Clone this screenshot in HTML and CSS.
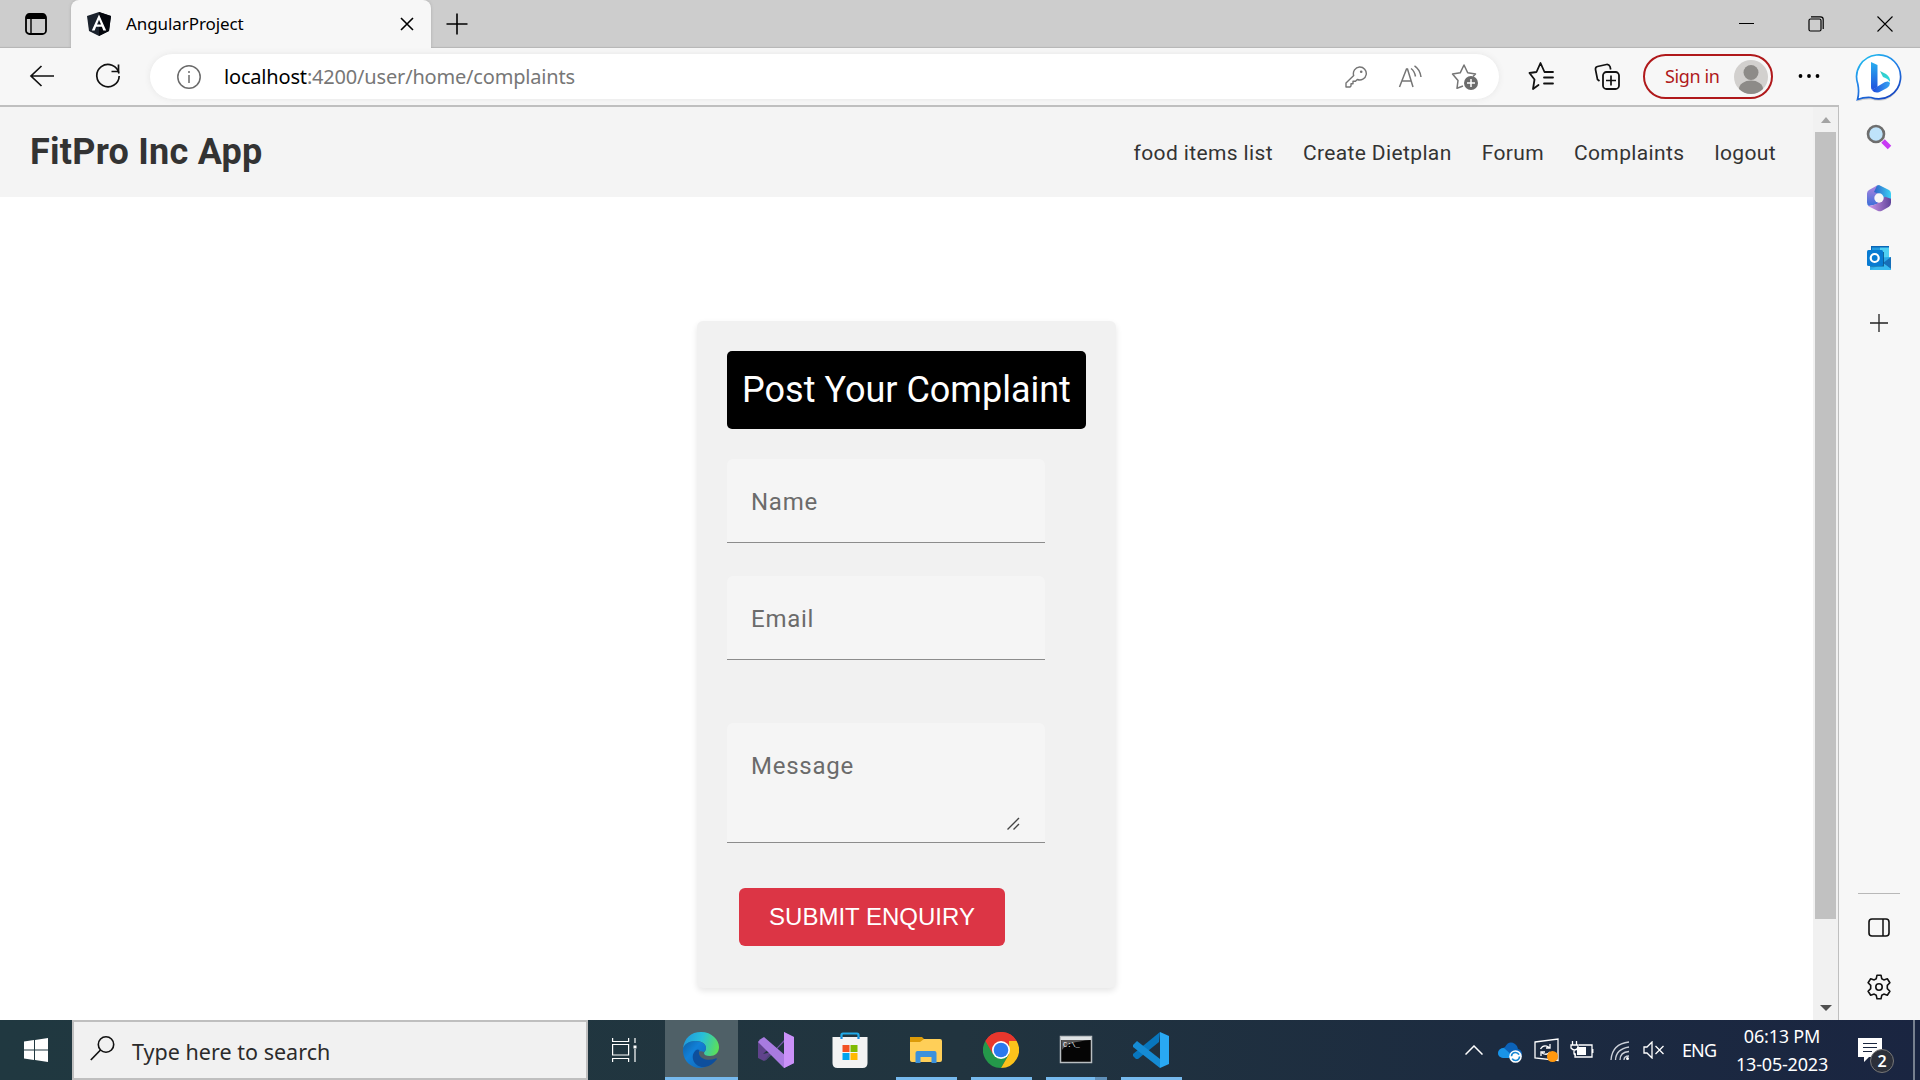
FILE: index.html
```html
<!DOCTYPE html>
<html lang="en">
<head>
<meta charset="utf-8">
<title>AngularProject</title>
<link rel="stylesheet" href="styles.css">
</head>
<body>
<div class="tabbar">
  <div class="cell tabactions"><svg width="22" height="22" viewBox="0 0 22 22"><rect x="1" y="1" width="20" height="20" rx="3.5" fill="none" stroke="#000" stroke-width="1.8"/><path d="M1 6V4a3 3 0 0 1 3-3h14a3 3 0 0 1 3 3v2z"/><path d="M6 6v15" stroke="#000" stroke-width="1.4"/></svg></div>
  <div class="tab">
    <svg width="26" height="26" viewBox="0 0 26 26"><path d="M13 1 25 5l-2 15-10 5L3 20 1 5z" fill="#1b222d"/><path d="M13 1 25 5l-2 15-10 5z" fill="#05070d"/><path d="M13 3.5 5.8 19.5h2.9l1.4-3.7h5.8l1.4 3.7h2.9zM13 8.8l2 4.7h-4z" fill="#fff" fill-rule="evenodd"/></svg>
    <span class="tab-title">AngularProject</span>
    <svg class="tab-close" width="14" height="14" viewBox="0 0 14 14"><path d="m1 1 12 12M13 1 1 13" stroke="#000" stroke-width="1.6"/></svg>
  </div>
  <div class="cell newtab"><svg width="22" height="22" viewBox="0 0 22 22"><path d="M11 0.5v21M.5 11h21" stroke="#000" stroke-width="1.6"/></svg></div>
  <div class="window-buttons">
    <div class="cell"><svg width="16" height="16" viewBox="0 0 16 16"><path d="M0 7.500h15" stroke="#000"/></svg></div>
    <div class="cell"><svg width="16" height="16" viewBox="0 0 16 16"><rect x="1" y="3" width="12" height="12" rx="1.5" fill="none" stroke="#000" stroke-width="1.2"/><path d="M3 .8h9.5q2.7 0 2.7 2.7V13" fill="none" stroke="#000" stroke-width="1.2"/></svg></div>
    <div class="cell"><svg width="16" height="16" viewBox="0 0 16 16"><path d="m.5.5 15 15M15.500.5.5 15.500" stroke="#000" stroke-width="1.1"/></svg></div>
  </div>
</div>

<div class="browser">
  <div class="main">
    <div class="toolbar">
      <div class="cell back"><svg width="26" height="24" viewBox="0 0 26 24"><path d="M25 12H2M12.500 2 2 12l10.500 10" fill="none" stroke="#111" stroke-width="1.7"/></svg></div>
      <div class="cell reload"><svg width="26" height="26" viewBox="0 0 26 26"><path d="M24 10.500A11.200 11.200 0 1 0 24.200 13" fill="none" stroke="#111" stroke-width="1.7"/><path d="M23.500 1.500v7h-7" fill="none" stroke="#111" stroke-width="1.7"/></svg></div>
      <div class="address">
        <svg width="24" height="24" viewBox="0 0 24 24"><circle cx="12" cy="12" r="11.200" fill="none" stroke="#6b6b6b" stroke-width="1.500"/><path d="M12 10v8M12 6v2" stroke="#6b6b6b" stroke-width="1.500"/></svg>
        <span class="url"><span class="host">localhost</span>:4200/user/home/complaints</span>
        <div class="address-icons">
          <div class="cell"><svg width="22" height="22" viewBox="0 0 22 22"><path d="M14.500 1a6.500 6.500 0 1 1-2.200 12.500L10.500 15.300H8v2.500H6V20l-1 1H1v-4l7.700-7.500A6.500 6.500 0 0 1 14.500 1z" fill="none" stroke="#757575" stroke-width="1.400" stroke-linejoin="round"/><circle cx="16.200" cy="5.800" r="1.300" fill="#757575"/></svg></div>
          <div class="cell"><svg width="26" height="24" viewBox="0 0 26 24"><path d="m2.500 22 7-18h1l5.500 18M5.500 16h9" fill="none" stroke="#757575" stroke-width="1.500"/><path d="M14 3.500q3.500 2.500 4.500 8M17.500.8q5.500 3.500 6.500 11.200" fill="none" stroke="#757575" stroke-width="1.500"/></svg></div>
          <div class="cell"><svg width="28" height="27" viewBox="0 0 28 27"><path d="M12 23 6 25.300l1-7.800L1.500 11l7.700-1.200L13 2l3.700 7.800 7.800 1.200-2.500 2.500" fill="none" stroke="#757575" stroke-width="1.500" stroke-linejoin="round"/><circle cx="20" cy="20" r="7" fill="#6b6b6b"/><path d="M20 16v8M16 20h8" stroke="#fff" stroke-width="1.500"/></svg></div>
        </div>
      </div>
      <div class="cell fav"><svg width="27" height="28" viewBox="0 0 27 28"><path d="m10.500 23-5.500 4 1.500-9.500L1.500 11l7-1L12.500 1l4 9h8.500M16 15.500h9M16 21.500h9" fill="none" stroke="#111" stroke-width="1.800" stroke-linejoin="round" stroke-linecap="round"/></svg></div>
      <div class="cell coll"><svg width="26" height="27" viewBox="0 0 26 27"><path d="M5.500 18 3.500 16.500 1.500 6.500q-.3-2.500 2-3l9-2q2.500-.3 3.500 2l.7 3" fill="none" stroke="#111" stroke-width="1.700"/><rect x="9" y="9" width="16" height="17" rx="3.500" fill="none" stroke="#111" stroke-width="1.800"/><path d="M17 12.500v10M12 17.500h10" stroke="#111" stroke-width="1.700"/></svg></div>
      <div class="signin"><span>Sign in</span><svg width="34" height="34" viewBox="0 0 34 34"><circle cx="17" cy="17" r="17" fill="#d2d0ce"/><circle cx="17" cy="12.500" r="7.500" fill="#8d8b88"/><path d="M5 29a12 8.500 0 0 1 24 0 17 17 0 0 1-24 0z" fill="#8d8b88"/></svg></div>
      <div class="cell more"><svg width="22" height="6" viewBox="0 0 22 6"><circle cx="2.500" cy="3" r="1.900"/><circle cx="11" cy="3" r="1.900"/><circle cx="19.500" cy="3" r="1.900"/></svg></div>
    </div>
    <div class="viewport">
      <div class="page">
        <header class="site-header">
          <h1>FitPro Inc App</h1>
          <nav><a>food items list</a><a>Create Dietplan</a><a>Forum</a><a>Complaints</a><a>logout</a></nav>
        </header>
        <section class="card">
          <h2>Post Your Complaint</h2>
          <div class="field">Name</div>
          <div class="field">Email</div>
          <div class="field message">Message<svg class="grip" width="13" height="13" viewBox="0 0 13 13"><path d="M.5 12.500 12 1M6.500 12.500 12 7" stroke="#444" stroke-width="1.400"/></svg></div>
          <button>SUBMIT ENQUIRY</button>
        </section>
      </div>
      <div class="scrollbar">
        <svg width="10" height="6" viewBox="0 0 10 6"><path d="M0 6 5 0l5 6z" fill="#a3a3a3"/></svg>
        <div class="thumb"></div>
        <svg class="down" width="12" height="6" viewBox="0 0 12 6"><path d="M0 0h12L6 6z" fill="#505050"/></svg>
      </div>
    </div>
  </div>
  <aside class="sidebar">
    <svg width="50" height="52" viewBox="0 0 50 52"><defs><linearGradient id="ring" x1="0" y1="0" x2=".6" y2="1"><stop offset="0" stop-color="#20c8ee"/><stop offset=".5" stop-color="#2385ea"/><stop offset="1" stop-color="#174ac5"/></linearGradient><linearGradient id="bb" x1="0" y1="0" x2="0" y2="1"><stop stop-color="#28aff0"/><stop offset="1" stop-color="#2050dd"/></linearGradient><linearGradient id="bt" x1="0" y1="0" x2="0" y2="1"><stop stop-color="#36c9c2"/><stop offset="1" stop-color="#26dce8"/></linearGradient><linearGradient id="bf"><stop stop-color="#1f49dc"/><stop offset="1" stop-color="#35a5f2"/></linearGradient></defs><path d="M3.500 46.500Q5.500 39 3.800 31A22 22 0 1 1 17 44.500Q10 44 3.500 46.500z" transform="translate(0 2)" fill="#000" opacity=".15"/><path d="M3.500 46.500Q5.500 39 3.800 31A22 22 0 1 1 17 44.500Q10 44 3.500 46.500z" fill="#fff" stroke="url(#ring)" stroke-width="1.700"/><path d="m17 9 6.500 3v22L18 37q-1-1-1-3z" fill="url(#bb)"/><path d="m26 18 6 3q4.500 3 4 8-2-3.500-7-5z" fill="url(#bt)"/><path d="m18 37 5.500-3.500L31 29q4-1.500 5 1 0 3-3 5l-8 4.300q-5 1-7-2.300z" fill="url(#bf)"/></svg>
    <svg class="s-search" width="26" height="26" viewBox="0 0 26 26"><path d="m17 17 6.500 6.500" stroke="#c83af4" stroke-width="5"/><circle cx="10" cy="10" r="8" fill="#bfe3fa" stroke="#6e6e6e" stroke-width="2.600"/></svg>
    <svg class="s-365" width="26" height="28" viewBox="0 0 26 28"><defs><linearGradient id="m1" x1="0" y1="0" x2="0" y2="1"><stop stop-color="#b184df"/><stop offset="1" stop-color="#3a6fd8"/></linearGradient><linearGradient id="m2"><stop stop-color="#2f61c7"/><stop offset="1" stop-color="#3bd2f5"/></linearGradient><linearGradient id="m3"><stop stop-color="#d29aec"/><stop offset="1" stop-color="#60449b"/></linearGradient></defs><path d="M11 1.500 3 6Q1 7 1 9.500v9Q1 21 3 22l9-2 3-14z" fill="url(#m1)"/><path d="m8 8 3-6.500 2-.500 10 5q2 1 2 3.500V19l-8-3-4-6z" fill="url(#m2)"/><path d="m2 22 10 5q2 .600 4-.300l7-4q2-1.500 2-4v-4l-6-2-6 4-2 3q-4 2-9 2.300z" fill="url(#m3)"/><circle cx="13" cy="14" r="4.700" fill="#f7f7f7"/></svg>
    <svg class="s-outlook" width="26" height="26" viewBox="0 0 26 26"><path d="M5 1h18v14H5z" fill="#0a66b7"/><path d="M14 2.500h9v11h-9z" fill="#50d0f3"/><path d="M6 2.500h8v11H6z" fill="#239bdf"/><path d="m4 13 21-1v13H4z" fill="#2ba9e6"/><path d="m25 12-8 6 8 6z" fill="#176fb8"/><path d="M4 25l13-7 8 6v1z" fill="#37b9ef"/><path d="M4 7h14v14.500H4z" fill="#074c83" opacity=".8"/><rect x="1" y="5" width="16" height="16" rx="1.500" fill="#087bd2"/><circle cx="8.700" cy="13" r="4" fill="none" stroke="#fff" stroke-width="2.200"/></svg>
    <svg class="s-plus" width="18" height="18" viewBox="0 0 18 18"><path d="M9 0v18M0 9h18" stroke="#222" stroke-width="1.300"/></svg>
    <div class="divider"></div>
    <svg class="s-panel" width="22" height="19" viewBox="0 0 22 19"><rect x="1" y="1" width="20" height="17" rx="3" fill="none" stroke="#111" stroke-width="1.600"/><path d="M15 1v17" stroke="#111" stroke-width="1.500"/></svg>
    <svg class="s-gear" width="26" height="26" viewBox="0 0 26 26"><path d="M11 1.200h4l.8 3.600 2 1.100 3.500-1.100 2.600 4-2.600 2.600v3.200l2.600 2.600-2.600 4-3.500-1.100-2 1.100-.8 3.600h-4l-.8-3.600-2-1.100-3.500 1.100-2.600-4 2.600-2.600v-3.200L2.100 8.800l2.600-4 3.500 1.100 2-1.100z" fill="none" stroke="#111" stroke-width="1.600" stroke-linejoin="round"/><circle cx="13" cy="13" r="3.200" fill="none" stroke="#111" stroke-width="1.600"/></svg>
  </aside>
</div>

<footer class="taskbar">
  <div class="cell start"><svg width="24" height="24" viewBox="0 0 24 24"><path d="m0 3.500 10-1.400v9.400H0zM11 2l13-2v11.500H11zM0 12.500h10v9.400L0 20.500zM11 12.500h13V24l-13-2z" fill="#fff"/></svg></div>
  <div class="search"><svg width="25" height="25" viewBox="0 0 25 25"><circle cx="16" cy="8.500" r="7.700" fill="none" stroke="#111" stroke-width="1.600"/><path d="M10.500 14 .800 24" stroke="#111" stroke-width="1.700"/></svg><span>Type here to search</span></div>
  <div class="cell taskview"><svg width="25" height="24" viewBox="0 0 25 24" fill="none" stroke="#fff" stroke-width="1.200"><path d="M.600 0v3.500h16V0M.600 24v-3.500h16V24M.600 6.500h16v10.500H.600zM23 0v5M23 11v13"/><path d="M21.500 7.500h3v3h-3z" fill="#fff" stroke="none"/></svg></div>
  <div class="app active"><svg width="36" height="36" viewBox="0 0 36 36"><defs><linearGradient id="e1" x1="0" y1=".3" x2="1" y2=".5"><stop stop-color="#2098dc"/><stop offset=".5" stop-color="#28bfd9"/><stop offset="1" stop-color="#5be05a"/></linearGradient><linearGradient id="e2" x1="0" y1="0" x2="1" y2="1"><stop stop-color="#0e61a8"/><stop offset=".4" stop-color="#1180d8"/><stop offset="1" stop-color="#1267b4"/></linearGradient></defs><path d="M0 17C1 6 8 0 18 0c11 0 18 8 18 15 0 6-4 9-9 9-4 0-6-1-6-3 0-1 2-2 2-5 0-4-4-7-10-7C6 9 1 13 0 17z" fill="url(#e1)"/><path d="M0 17c1-5 6-8 12-8 7 0 11 3 11 7 0 2-1 3-2 4-5-2-8 1-8 5 0 6 4 9 9 10-11 4-23-5-22-18z" fill="url(#e2)"/><path d="M13 18c-7 6-2 18 9 17 5-1 9-4 12-8q-.5-1-1.500-.500c-7 3-15 .500-16.500-4.500q-.5-2 .5-4-2-1-3.500 0z" fill="#0d4f9d"/></svg></div>
  <div class="app"><svg width="36" height="36" viewBox="0 0 36 36"><path d="m0 10 6-4 8 8-9 8 9-2 0 0L6 29 0 26z" fill="#60438c"/><path d="m14 21 12-13V0l10 5v26l-10 5V10L8 28l-2 1z" fill="#7355a8"/><path d="M2 7.500 6 5l30 26-10 5L0 10z" fill="#a87be0"/><path d="m26 0 10 5v26l-10 5z" fill="#ca91f8"/></svg></div>
  <div class="app"><svg width="36" height="36" viewBox="0 0 36 36"><path d="M9.500 8V3q0-1.500 1.500-1.500h14q1.500 0 1.500 1.500v5" fill="none" stroke="#20a9e8" stroke-width="2.200"/><path d="M.5 5h35v26q0 5-5 5h-25q-5 0-5-5z" fill="#f3f3f3"/><path d="M10.500 13h7v7h-7z" fill="#f25022"/><path d="M18.500 13h7v7h-7z" fill="#7fba00"/><path d="M10.500 21h7v7h-7z" fill="#00a4ef"/><path d="M18.500 21h7v7h-7z" fill="#ffb900"/><path d="M9.500 5v2M26.500 5v2" stroke="#1689dc" stroke-width="2.200"/></svg></div>
  <div class="app running"><svg width="36" height="36" viewBox="0 0 36 36"><path d="M2 5h12l3 3v6H2z" fill="#dc9b08"/><path d="M2 10h10l4-3h16q2 0 2 2v19q0 2-2 2H4q-2 0-2-2z" fill="#ffcf58"/><path d="M7.500 31V21q0-2 2-2h17q2 0 2 2v10h-5v-6h-11v6z" fill="#3b91dc"/></svg></div>
  <div class="app running"><svg width="36" height="36" viewBox="0 0 36 36"><path d="M18 18 2.400 9a18 18 0 0 1 31.200 0z" fill="#e8372d"/><path d="M2.400 9a18 18 0 0 0 15.600 27l7.800-13.500L18 18z" fill="#24984a"/><path d="M33.600 9A18 18 0 0 1 18 36l7.800-13.500L26 9z" fill="#fcc21b"/><path d="M2.400 9A18 18 0 0 1 33.600 9H18L10.200 22.500z" fill="#e8372d"/><circle cx="18" cy="18" r="9" fill="#fff"/><circle cx="18" cy="18" r="7.300" fill="#2b79ee"/></svg></div>
  <div class="app running multi"><svg width="36" height="36" viewBox="0 0 36 36"><rect x="2.500" y="4.500" width="31" height="26" fill="#050505" stroke="#b9bec1" stroke-width="1.500"/><path d="M3 5h30v3H3z" fill="#dfe3e5"/><path d="M3.500 8h29Q9 10 4 18z" fill="#555"/><text x="5" y="15" class="prompt">C:\_</text></svg></div>
  <div class="app running"><svg width="36" height="36" viewBox="0 0 36 36"><path d="m27 0 9 4v28l-9 4z" fill="#29a9f4"/><path d="m27 0-1 10L5 27l-2 0-3-3v-2z" fill="#0876bd"/><path d="m0 13 4-4 23 18v9L0 15z" fill="#158bd4"/></svg></div>
  <div class="tray">
    <svg width="18" height="10" viewBox="0 0 18 10"><path d="m.5 9.500 8.500-8.500 8.500 8.500" fill="none" stroke="#fff" stroke-width="1.500"/></svg>
    <svg class="cloud" width="24" height="21" viewBox="0 0 24 21"><path d="M7 5q4-7 10-3 3 2 3 5 4 1 4 5t-4 4H5q-5-1-5-5t5-5z" fill="#0b62b8"/><path d="M0 11q1-5 6-5l11 10H5q-5-1-5-5z" fill="#1994e7"/><circle cx="17.500" cy="14.500" r="6.300" fill="#fff"/><circle cx="17.500" cy="14.500" r="4" fill="none" stroke="#1587d3" stroke-width="1.700" stroke-dasharray="10 2.500"/></svg>
    <svg class="update" width="25" height="25" viewBox="0 0 25 25"><path d="M1 4 24 1v21.500L1 20z" fill="none" stroke="#fff" stroke-width="1.300"/><path d="M6.500 11q3-5 8-2l1 1M16 6v4h-4M16 14q-3 4-8 1M7 18v-4h4" fill="none" stroke="#fff" stroke-width="1.300"/><circle cx="18.500" cy="18.500" r="5.500" fill="#ff980f"/></svg>
    <svg class="battery" width="24" height="18" viewBox="0 0 24 18"><path d="M9 4h13v12H5v-4M22.800 8v4M4 9v3q0 2 2 2M2.500 0v4M6.500 0v4M1 4h7v3q-3.500 4-7 0z" fill="none" stroke="#fff" stroke-width="1.300"/><path d="M7 6h9v8H7z" fill="#fff"/></svg>
    <svg class="wifi" width="20" height="20" viewBox="0 0 20 20" fill="none" stroke="#cbd0d9" stroke-width="1.300"><path d="M1 19Q2 3 19 1M5.500 19Q6 8 19 6M10 19Q10 11 19 10.500M14 19q0-4 5-4"/><circle cx="17.500" cy="17.500" r="1.500" fill="#fff" stroke="none"/></svg>
    <svg class="sound" width="21" height="18" viewBox="0 0 21 18" fill="none" stroke="#fff" stroke-width="1.300"><path d="M1 6h3l5-5v16l-5-5H1zM12.500 5l8 8M20.500 5l-8 8"/></svg>
    <span class="lang">ENG</span>
    <div class="clock"><span>06:13 PM</span><span>13-05-2023</span></div>
    <div class="notice"><svg width="24" height="24" viewBox="0 0 24 24"><path d="M0 0h24v19H11l-5 5v-5H0z" fill="#fff"/><path d="M5 5.500h14M5 9.500h14M5 13.500h9" stroke="#1b2740" stroke-width="1.200"/></svg><span class="badge">2</span></div>
  </div>
</footer>
</body>
</html>
```
FILE: styles.css
```css
* { box-sizing: border-box; }
body { margin: 0; width: 1920px; height: 1080px; overflow: hidden; display: flex; flex-direction: column; font-family: "Noto Sans", "Open Sans", sans-serif; background: #fff; }
svg { display: block; flex: none; }
.cell { display: flex; align-items: center; justify-content: center; flex: none; }

.tabbar { height: 48px; flex: none; display: flex; align-items: center; background: #cdcdcd; box-shadow: inset 0 -2px 1px -1px #b5b5b5; }
.tabactions { width: 71px; }
.tab { width: 360px; height: 48px; display: flex; align-items: center; padding: 0 17px 0 15px; background: #f7f7f7; border-radius: 8px 8px 0 0; box-shadow: 0 0 3px #aaa; clip-path: inset(0 -3px); }
.tab-title { margin-left: 14px; padding-bottom: 2px; font-size: 17px; letter-spacing: -0.08px; }
.tab-close { margin-left: auto; }
.newtab { width: 52px; padding-bottom: 1px; }
.window-buttons { margin-left: auto; display: flex; padding: 0 1px 1px 0; }
.window-buttons .cell { width: 69px; }

.browser { flex: 1; display: flex; min-height: 0; background: #f7f7f7; }
.main { width: 1839px; display: flex; flex-direction: column; }
.toolbar { height: 57px; flex: none; display: flex; align-items: center; }
.toolbar > .cell { padding-bottom: 1px; }
.back { width: 84px; }
.reload { width: 48px; margin-right: 18px; }
.address { width: 1349px; height: 45px; border-radius: 23px; background: #fff; box-shadow: 0 0 6px #e6e6e6; display: flex; align-items: center; padding: 0 7px 0 27px; }
.url { margin-left: 23px; padding-bottom: 1px; font-size: 20px; letter-spacing: -0.18px; color: #777; white-space: nowrap; }
.host { color: #000; }
.address-icons { margin-left: auto; display: flex; }
.address-icons .cell { width: 54.5px; }
.fav { width: 84px; }
.coll { width: 48px; }
.signin { width: 130px; height: 45px; margin-left: 12px; border: 2px solid #b0191b; border-radius: 23px; display: flex; align-items: center; justify-content: space-between; padding: 0 3px 0 20px; color: #b0191b; font-size: 18px; letter-spacing: -0.4px; white-space: nowrap; }
.signin span { padding-bottom: 2px; }
.more { width: 66px; padding-left: 6px; }

.viewport { flex: 1; min-height: 0; display: flex; border-top: 2px solid #bfbfbf; border-right: 1px solid #bfbfbf; background: #fff; }
.page { flex: 1; font-family: Roboto, sans-serif; }
.site-header { height: 90px; background: #f4f4f4; display: flex; align-items: center; justify-content: space-between; padding: 0 37px 0 30px; color: #333; }
h1 { margin: 0; font-size: 36px; font-weight: 700; letter-spacing: 0.25px; }
nav { display: flex; gap: 30px; font-size: 21px; letter-spacing: 0.37px; padding-top: 1px; }
.card { width: 419px; height: 667px; margin: 124px 0 0 697px; padding: 30px; background: #f1f1f1; border-radius: 6px; box-shadow: 0 3px 6px rgba(0,0,0,.1); }
h2 { margin: 0 0 30px; width: 359px; height: 78px; background: #000; border-radius: 5px; color: #fff; font-size: 36px; font-weight: 400; line-height: 78px; text-align: center; white-space: nowrap; }
.field { width: 318px; height: 84px; margin-bottom: 33px; padding: 28px 24px; background: #f5f5f5; border-bottom: 1px solid #8c8c8c; border-radius: 6px 6px 0 0; color: #6b6b6b; font-size: 24px; line-height: 30px; letter-spacing: 0.75px; }
.message { height: 120px; margin-top: 63px; margin-bottom: 45px; padding-right: 25px; display: flex; justify-content: space-between; }
.grip { align-self: flex-end; margin-bottom: -16px; }
button { display: block; width: 266px; height: 58px; margin-left: 12px; padding: 0; border: 0; border-radius: 6px; background: #dc3545; color: #fff; font-family: "Liberation Sans", Arial, sans-serif; font-size: 24px; }
.scrollbar { width: 25px; background: #f1f1f1; display: flex; flex-direction: column; align-items: center; padding: 10px 0 9px; }
.thumb { width: 21px; height: 787px; margin-top: 9px; background: #c1c1c1; }
.down { margin-top: auto; }

.sidebar { width: 81px; display: flex; flex-direction: column; align-items: center; padding-right: 1px; }
.sidebar > svg:first-child { margin-top: 5px; }
.s-search { margin-top: 19px; }
.s-365 { margin-top: 34px; }
.s-outlook { margin-top: 33px; }
.s-plus { margin-top: 43px; }
.divider { width: 42px; height: 1px; margin-top: auto; background: #b8b8b8; }
.s-panel { margin-top: 24px; }
.s-gear { margin: 37px 0 20px; }

.taskbar { height: 60px; flex: none; display: flex; background: linear-gradient(90deg, #203840, #21343f 50%, #1c2b40 78%, #1a2541); color: #fff; }
.start { width: 72px; }
.search { width: 516px; border: 2px solid #bfbfbf; background: #f1f1f1; display: flex; align-items: center; padding: 0 0 0 16px; color: #2b2b2b; font-size: 21.5px; letter-spacing: 0.02px; }
.search span { margin-left: 17px; padding-top: 3px; }
.search svg { margin-top: -4px; }
.taskview { width: 77px; padding-right: 4px; }
.app { width: 73px; margin-right: 1.67px; display: flex; align-items: center; justify-content: center; flex: none; border-bottom: 3px solid transparent; padding: 3px 1px 0 0; }
.active { background: #4f6067; border-color: #76b9ed; }
.running { width: 61px; margin: 0 7px; border-color: #76b9ed; }
.multi { border-image: linear-gradient(90deg, #76b9ed 77%, #5f8fb8 77%) 3; border-width: 0 0 3px; border-style: solid; }
.prompt { font: 7px "Liberation Mono", monospace; fill: #fff; }
.tray { margin-left: auto; display: flex; align-items: center; margin-right: 5px; padding-right: 31px; border-right: 2px solid #77808f; }
.cloud { margin-left: 15px; margin-top: 4px; }
.update { margin-left: 12px; }
.battery { margin-left: 11px; }
.wifi { margin-left: 16px; margin-top: 2px; }
.sound { margin-left: 13px; }
.lang { margin-left: 18px; width: 34px; font-size: 18px; letter-spacing: -0.9px; }
.clock { width: 94px; margin-left: 19px; display: flex; flex-direction: column; align-items: center; font-size: 18px; line-height: 28px; letter-spacing: -0.2px; white-space: nowrap; }
.notice { position: relative; margin-left: 29px; }
.badge { position: absolute; left: 12px; top: 11px; width: 24px; height: 24px; border: 1px solid #777; border-radius: 50%; background: #2c303a; font-size: 16px; font-weight: 600; line-height: 22px; text-align: center; }
```
